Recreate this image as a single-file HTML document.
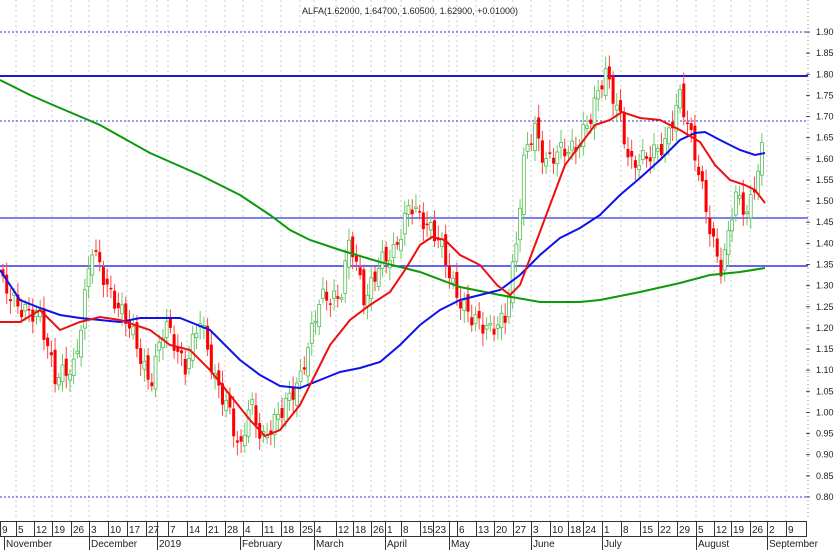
<!DOCTYPE html>
<html><head><meta charset="utf-8"><style>
html,body{margin:0;padding:0;background:#fff;width:837px;height:550px;overflow:hidden}
svg{display:block;font-family:"Liberation Sans",sans-serif}
</style></head><body>
<svg id="c" width="837" height="550" xmlns="http://www.w3.org/2000/svg">
<rect width="837" height="550" fill="#fff"/>
<g id="grid"></g>
<line x1="0" y1="32" x2="808" y2="32" stroke="#3333ee" stroke-dasharray="2,2"/>
<line x1="0" y1="121" x2="808" y2="121" stroke="#3333ee" stroke-dasharray="2,2"/>
<line x1="0" y1="497" x2="808" y2="497" stroke="#3333ee" stroke-dasharray="2,2"/>
<line x1="0" y1="76" x2="808" y2="76" stroke="#1a1acc" stroke-width="2"/>
<line x1="0" y1="218" x2="808" y2="218" stroke="#3333ee" stroke-width="1.2"/>
<line x1="0" y1="266" x2="808" y2="266" stroke="#3333ee" stroke-width="1.5"/>
<g id="candles"></g>
<polyline fill="none" stroke="#0a9a0a" stroke-width="2" points="0,80 30,95 60,108 100,125 150,153 200,175 240,195 270,215 290,230 310,240 340,250 380,262 420,272 460,287 500,295 540,302 580,302 600,300 640,292 680,283 710,275 740,272 765,268"/>
<polyline fill="none" stroke="#1010ee" stroke-width="2" points="0,270 20,300 40,308 60,315 80,318 100,320 120,322 140,318 180,318 210,330 240,360 260,375 280,386 300,388 320,380 340,372 360,368 380,362 400,345 420,325 440,310 460,300 480,295 500,290 520,275 540,255 560,238 580,228 600,215 620,195 640,178 660,160 680,140 695,133 705,132 720,140 740,150 755,155 765,153"/>
<polyline fill="none" stroke="#ee1010" stroke-width="2" points="0,322 20,322 40,310 60,330 80,322 100,317 120,320 150,330 170,345 190,350 210,370 230,395 250,420 265,436 280,430 300,405 315,375 330,345 350,320 370,305 390,292 405,270 420,245 432,237 445,240 460,255 480,265 497,285 510,295 520,285 535,245 550,205 565,165 580,145 595,125 610,120 622,112 640,118 660,120 680,130 700,142 715,165 730,180 745,185 755,190 765,203"/>
<line x1="808" y1="0" x2="808" y2="520" stroke="#888" stroke-dasharray="1,3"/>
<g id="axis" font-size="9" fill="#222"></g>
<text x="410" y="14" font-size="9" text-anchor="middle" fill="#222">ALFA(1.62000, 1.64700, 1.60500, 1.62900, +0.01000)</text>
<rect x="0.5" y="521.5" width="806" height="15" fill="none" stroke="#333"/>
<g id="dates" font-size="10" fill="#222"></g>
</svg>
<script>
var NS="http://www.w3.org/2000/svg";
function el(p,t,a,txt){var e=document.createElementNS(NS,t);for(var k in a)e.setAttribute(k,a[k]);if(txt)e.textContent=txt;document.getElementById(p).appendChild(e);return e;}
function Y(p){return 32+(1.90-p)/0.05*21.136;}
var ticks=[[0,"9"],[16,"5"],[34,"12"],[52,"19"],[71,"26"],[89,"3"],[108,"10"],[127,"17"],[146,"27"],[157,""],[168,"7"],[187,"14"],[206,"21"],[225,"28"],[243,"4"],[262,"11"],[281,"18"],[300,"25"],[314,"4"],[336,"12"],[353,"18"],[371,"26"],[385,"1"],[401,"8"],[420,"15"],[433,"23"],[449,""],[457,"6"],[476,"13"],[494,"20"],[513,"27"],[531,"3"],[550,"10"],[568,"18"],[583,"24"],[602,"1"],[621,"8"],[640,"15"],[658,"22"],[677,"29"],[696,"5"],[714,"12"],[731,"19"],[750,"26"],[767,"2"],[786,"9"]];
ticks.forEach(function(t){if(t[0]>0)el("grid","line",{x1:t[0],y1:0,x2:t[0],y2:521,stroke:"#ccc","stroke-dasharray":"2,3"});
 el("dates","line",{x1:t[0]+0.5,y1:522,x2:t[0]+0.5,y2:536,stroke:"#333"});
 el("dates","text",{x:t[0]+2,y:533},t[1]);});
[[4,"November"],[89,"December"],[157,"2019"],[240,"February"],[314,"March"],[385,"April"],[449,"May"],[531,"June"],[602,"July"],[696,"August"],[767,"September"]].forEach(function(m){
 el("dates","line",{x1:m[0]+0.5,y1:536,x2:m[0]+0.5,y2:550,stroke:"#333"});
 el("dates","text",{x:m[0]+2,y:547},m[1]);});
for(var i=0;i<=22;i++){var p=1.90-i*0.05,y=Y(p);el("axis","text",{x:816,y:y+3},p.toFixed(2));el("axis","line",{x1:806,y1:y,x2:810,y2:y,stroke:"#444"});}
var kp=[[3,1.33],[20,1.27],[40,1.25],[55,1.10],[75,1.12],[92,1.40],[110,1.28],[130,1.20],[150,1.05],[165,1.20],[185,1.08],[200,1.20],[215,1.05],[230,0.97],[240,0.87],[250,1.00],[262,0.90],[280,0.97],[300,1.05],[320,1.25],[340,1.25],[350,1.40],[365,1.25],[380,1.35],[395,1.38],[410,1.50],[420,1.47],[440,1.42],[455,1.30],[470,1.25],[490,1.22],[505,1.25],[515,1.40],[525,1.65],[535,1.70],[545,1.62],[560,1.65],[575,1.65],[590,1.72],[605,1.83],[620,1.72],[630,1.60],[650,1.62],[665,1.64],[680,1.75],[690,1.66],[700,1.55],[712,1.40],[722,1.32],[735,1.50],[748,1.45],[755,1.52],[765,1.63]];
function P(x){for(var i=0;i<kp.length-1;i++){if(x<=kp[i+1][0]){var a=kp[i],b=kp[i+1];return a[1]+(b[1]-a[1])*(x-a[0])/(b[0]-a[0]);}}return kp[kp.length-1][1];}
var prev=P(3);
for(var x=3;x<=765;x+=3.72){
 var c=P(x)+0.03*Math.sin(x*1.7)+0.02*Math.sin(x*0.53);
 var o=prev+0.015*Math.sin(x*2.3);
 var hi=Math.max(o,c)+0.01+0.02*Math.abs(Math.sin(x*3.1)),lo=Math.min(o,c)-0.01-0.02*Math.abs(Math.cos(x*2.7));
 var up=c>=o,col=up?"#55bb55":"#ff0000";
 el("candles","line",{x1:x,y1:Y(hi),x2:x,y2:Y(lo),stroke:up?"#66cc66":"#ff4444","stroke-width":1});
 var t=Y(Math.max(o,c)),h=Math.max(1.5,Y(Math.min(o,c))-t);
 el("candles","rect",{x:x-1.5,y:t,width:3,height:h,fill:up?"#fff":"#ff0000",stroke:col,"stroke-width":up?0.8:0});
 prev=c;}
</script>
</body></html>
